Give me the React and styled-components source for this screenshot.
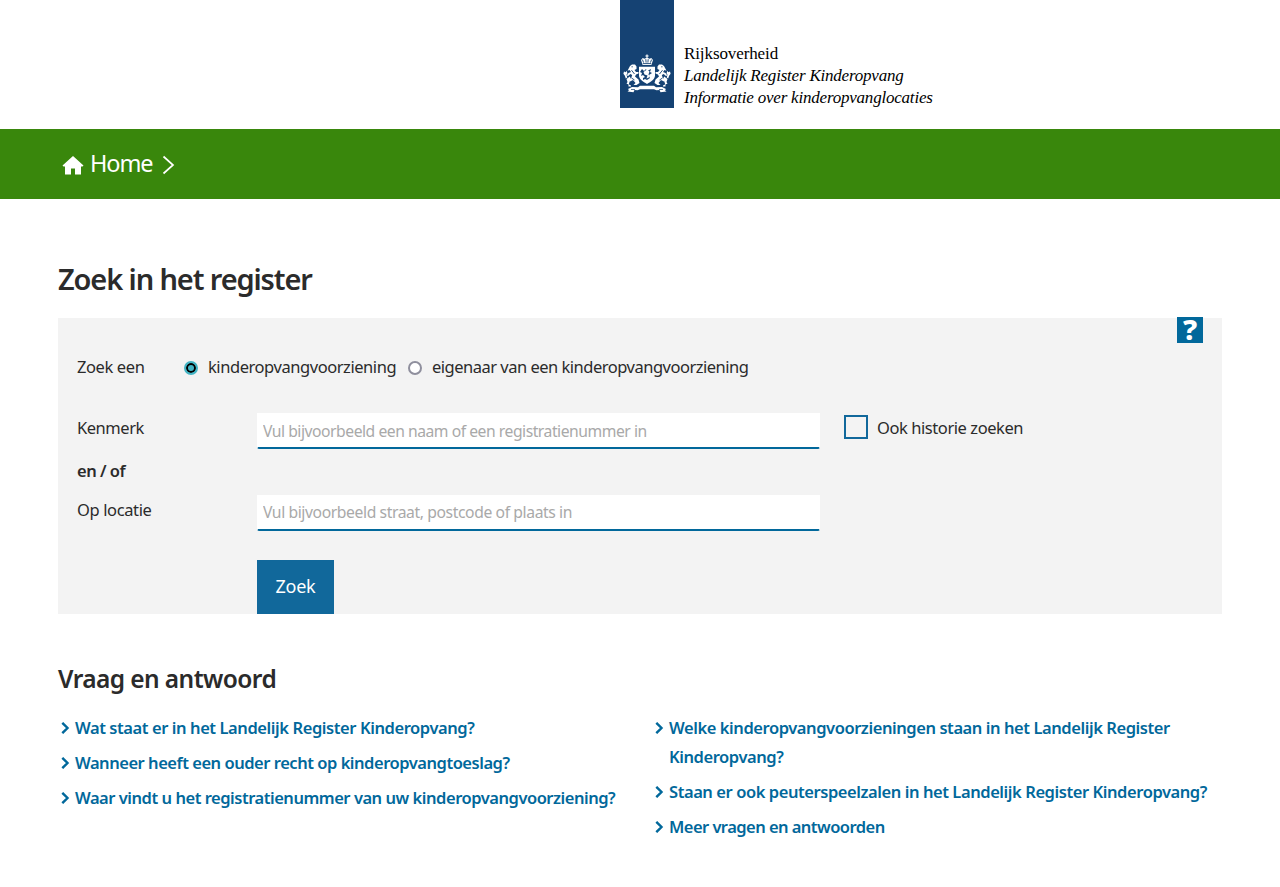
import React from 'react';
import styled, { createGlobalStyle } from 'styled-components';

const Global = createGlobalStyle`
  *, *::before, *::after { box-sizing: border-box; }
  body { margin: 0; background: #fff; color: #2b2b2b; font: 16.5px/30px "Noto Sans", "Open Sans", sans-serif; }
  h1, h2, p, ul { margin: 0; padding: 0; }
  ul { list-style: none; }
`;

const Track = styled.span`
  letter-spacing: ${p => p.$by}px;
  white-space: nowrap;
`;

const Header = styled.header`
  height: 129px;
  padding-left: 620px;
  display: flex;
  align-items: flex-start;
`;
const Ribbon = styled.div`
  width: 54px;
  height: 108px;
  background: #154273;
  display: flex;
  align-items: flex-end;
  justify-content: center;
  padding-bottom: 14px;
`;
const Wordmark = styled.div`
  padding: 43px 0 0 10px;
  font: 17px/22px "Liberation Serif", "Times New Roman", serif;
  color: #000;
`;
const WordLine = styled.p`
  font-style: ${p => (p.$italic ? 'italic' : 'normal')};
  letter-spacing: ${p => (p.$italic ? -0.21 : -0.1)}px;
`;

const NavBar = styled.nav`
  height: 70px;
  background: #39870c;
  color: #fff;
  display: flex;
  align-items: center;
  padding-left: 62px;
`;
const HomeLink = styled.a`
  display: flex;
  align-items: center;
  font-size: 23.5px;
  line-height: 66px;
  height: 70px;
  span { margin-top: -2px; }
  svg { margin: 2px 6px 0 0; }
`;
const Crumb = styled.svg`
  margin: 2px 0 0 10px;
`;

const Main = styled.main`
  padding: 60px 58px 0;
`;
const Title = styled.h1`
  font-size: 29px;
  line-height: 40px;
  font-weight: 600;
`;
const Panel = styled.form`
  position: relative;
  margin-top: 19px;
  height: 296px;
  padding: 34px 19px 0;
  background: #f3f3f3;
`;
const Help = styled.a`
  position: absolute;
  top: -1px;
  right: 19px;
  width: 26px;
  height: 26px;
  background: #01689b;
  color: #fff;
  font-size: 29px;
  line-height: 24px;
  font-weight: 800;
  text-align: center;
`;
const Row = styled.div`
  display: flex;
  align-items: flex-start;
  height: ${p => p.$h}px;
  margin-bottom: ${p => p.$after || 0}px;
`;
const Label = styled.div`
  width: ${p => p.$w || 180}px;
  font-weight: ${p => (p.$strong ? 600 : 400)};
  line-height: ${p => p.$lh || 30}px;
`;
const Option = styled.label`
  display: flex;
  align-items: center;
  gap: 10px;
  width: ${p => p.$w}px;
  height: 30px;
`;
const Radio = styled.span`
  flex: none;
  width: 14px;
  height: 14px;
  margin-top: 2px;
  border-radius: 50%;
  border: 2px solid ${p => (p.$on ? '#42b4c4' : '#8f8f9d')};
  background: ${p => (p.$on ? '#42b4c4' : '#fff')};
  box-shadow: ${p => (p.$on ? 'inset 0 0 0 2px #000' : 'none')};
`;
const Input = styled.input`
  width: 563px;
  height: 36px;
  padding: ${p => p.$drop || 0}px 5px 0;
  border: 0 solid transparent;
  border-width: 0 1px 2px;
  border-bottom-color: #01689b;
  border-radius: 0 0 2px 2px;
  background: #fff;
  font: inherit;
  font-size: 15.7px;
  letter-spacing: ${p => p.$by}px;
  &::placeholder { color: #a9a9a9; opacity: 1; }
`;
const Check = styled.label`
  display: flex;
  align-items: center;
  gap: 9px;
  height: 30px;
  margin-left: 24px;
`;
const Box = styled.span`
  width: 24px;
  height: 24px;
  margin-top: -2px;
  border: 2px solid #11689b;
`;
const Submit = styled.button`
  margin-left: 180px;
  width: 77px;
  height: 54px;
  padding: 0 0 2px;
  border: 0;
  background: #11689b;
  color: #fff;
  font: inherit;
  font-size: 18px;
`;

const Subtitle = styled.h2`
  margin-top: 45px;
  font-size: 24.5px;
  line-height: 40px;
  font-weight: 600;
`;
const Columns = styled.div`
  display: grid;
  grid-template-columns: 570px 570px;
  gap: 24px;
  margin-top: 14px;
`;
const Item = styled.li`
  display: flex;
  gap: 5px;
  margin-bottom: 6px;
  padding-left: 3px;
  color: #01689b;
  font-weight: 600;
  line-height: 29px;
  svg { flex: none; margin-top: 9px; }
`;

const Emblem = () => (
  <svg width="48" height="40" viewBox="0 0 48 40" fill="#fff">
    <path d="M23.4 .5h1.200v1h1v1h-1v1.300h-1.200V2.500h-1v-1h1z" />
    <path d="M18 6l1.700-2 1.800.8 2.500-1.200 2.500 1.200 1.800-.8L30 6l-1.600 5h-8.800z" />
    <path d="M19.400 5.600l1.200 3m2.200-3.400l.3 3.400m5.500-3l-1.200 3m-2.200-3.400l-.3 3.400M19.800 9.600h8.400" stroke="#154273" strokeWidth=".9" />
    <path d="M16 12.800h16v8.500c0 4-4 6.500-8 8.700-4-2.200-8-4.700-8-8.700z" />
    <path d="M19 15l2 2 2-2 1 2 4-2-1 3 2 1-3 2 1 3-3 2-2-1-2 1v-2l2-1-2-2-2 1 1-3-2-1z" fill="#154273" />
    <path d="M20.500 18l3.500-2.500 2.500 2-1 3 1.500 2.500-3.500 1.500 1-3-3-1z" />
    {[1, -1].map(s => (
      <g key={s} transform={s === 1 ? undefined : 'translate(48 0) scale(-1 1)'}>
        <path d="M7 12l2-1.500h3l1.500 2v2.500l-2 1 1.500 2h2.500v1.500l-2.500 1-1 2 3.500 3 1 3.500-3 2h-3l2-2-2.500-3-4 2v2.500l2 1v1H5.500v-2l1-2-1-1.500 2.700-3 1-3-2-1-1.700 1.700H3.500l2-2.700 2.500-1-1.500-2-2 .8z" />
        <path d="M1 17.500l1.700.8.800-1.600 1 2.500-1 1.600.8 2.600-1.500 1-.9-2.600-1.500-2z" />
        <path d="M6.800 22.500l-3.300 2.500 1 3-1 1.700 2.500.8v-3.600l2-1.700z" />
        <path d="M8.500 12.800h1.300M8.500 16.200l3 3.800m-3 4l3 2" stroke="#154273" strokeWidth=".9" />
        <path d="M5 35l4-2 6 .2 2-1.500h7v3.600h-7l-2.500 1-3-.3-1 2.200-6-.7 1.500-1.300z" />
        <path d="M8 35.500h4" stroke="#154273" strokeWidth=".7" />
      </g>
    ))}
  </svg>
);
const Chevron = () => (
  <svg width="9" height="12" viewBox="0 0 9 12" fill="none" stroke="#01689b" strokeWidth="2.400">
    <path d="M1.300 .8l5.200 5.200-5.200 5.200" />
  </svg>
);

const left = [
  ['Wat staat er in het Landelijk Register Kinderopvang?', -0.42],
  ['Wanneer heeft een ouder recht op kinderopvangtoeslag?', -0.47],
  ['Waar vindt u het registratienummer van uw kinderopvangvoorziening?', -0.47],
];
const right = [
  ['Welke kinderopvangvoorzieningen staan in het Landelijk Register', -0.43, 'Kinderopvang?'],
  ['Staan er ook peuterspeelzalen in het Landelijk Register Kinderopvang?', -0.43],
  ['Meer vragen en antwoorden', -0.54],
];
const Links = ({ items }) => (
  <ul>
    {items.map(([text, by, more]) => (
      <Item key={text}>
        <Chevron />
        <Track $by={by}>{text}{more && <><br />{more}</>}</Track>
      </Item>
    ))}
  </ul>
);

export default function App() {
  return (
    <>
      <Global />
      <Header>
        <Ribbon><Emblem /></Ribbon>
        <Wordmark>
          <WordLine>Rijksoverheid</WordLine>
          <WordLine $italic>Landelijk Register Kinderopvang</WordLine>
          <WordLine $italic>Informatie over kinderopvanglocaties</WordLine>
        </Wordmark>
      </Header>
      <NavBar>
        <HomeLink>
          <svg width="22" height="19" viewBox="0 0 22 19" fill="#fff"><path d="M11 0l10.500 9.500-1 1H19V18.500h-6v-6H9v6H3v-8H1.500l-1-1z" /></svg>
          <Track $by={-1.1}>Home</Track>
        </HomeLink>
        <Crumb width="13" height="20" viewBox="0 0 13 20" fill="none" stroke="#fff" strokeWidth="1.700"><path d="M1.500 1.500L11 10l-9.500 8.500" /></Crumb>
      </NavBar>
      <Main>
        <Title><Track $by={-1.12}>Zoek in het register</Track></Title>
        <Panel>
          <Help>?</Help>
          <Row $h={30} $after={31}>
            <Label $w={107}><Track $by={-0.4}>Zoek een</Track></Label>
            <Option $w={224}><Radio $on /><Track $by={-0.44}>kinderopvangvoorziening</Track></Option>
            <Option><Radio /><Track $by={-0.5}>eigenaar van een kinderopvangvoorziening</Track></Option>
          </Row>
          <Row $h={36}>
            <Label><Track $by={-0.45}>Kenmerk</Track></Label>
            <Input $by={-0.47} $drop={2} placeholder="Vul bijvoorbeeld een naam of een registratienummer in" />
            <Check><Box /><Track $by={-0.43}>Ook historie zoeken</Track></Check>
          </Row>
          <Row $h={46}><Label $strong $lh={44}><Track $by={-0.5}>en / of</Track></Label></Row>
          <Row $h={36} $after={29}>
            <Label><Track $by={-0.38}>Op locatie</Track></Label>
            <Input $by={-0.4} placeholder="Vul bijvoorbeeld straat, postcode of plaats in" />
          </Row>
          <Submit type="button"><Track $by={-0.25}>Zoek</Track></Submit>
        </Panel>
        <Subtitle><Track $by={-0.58}>Vraag en antwoord</Track></Subtitle>
        <Columns>
          <Links items={left} />
          <Links items={right} />
        </Columns>
      </Main>
    </>
  );
}
